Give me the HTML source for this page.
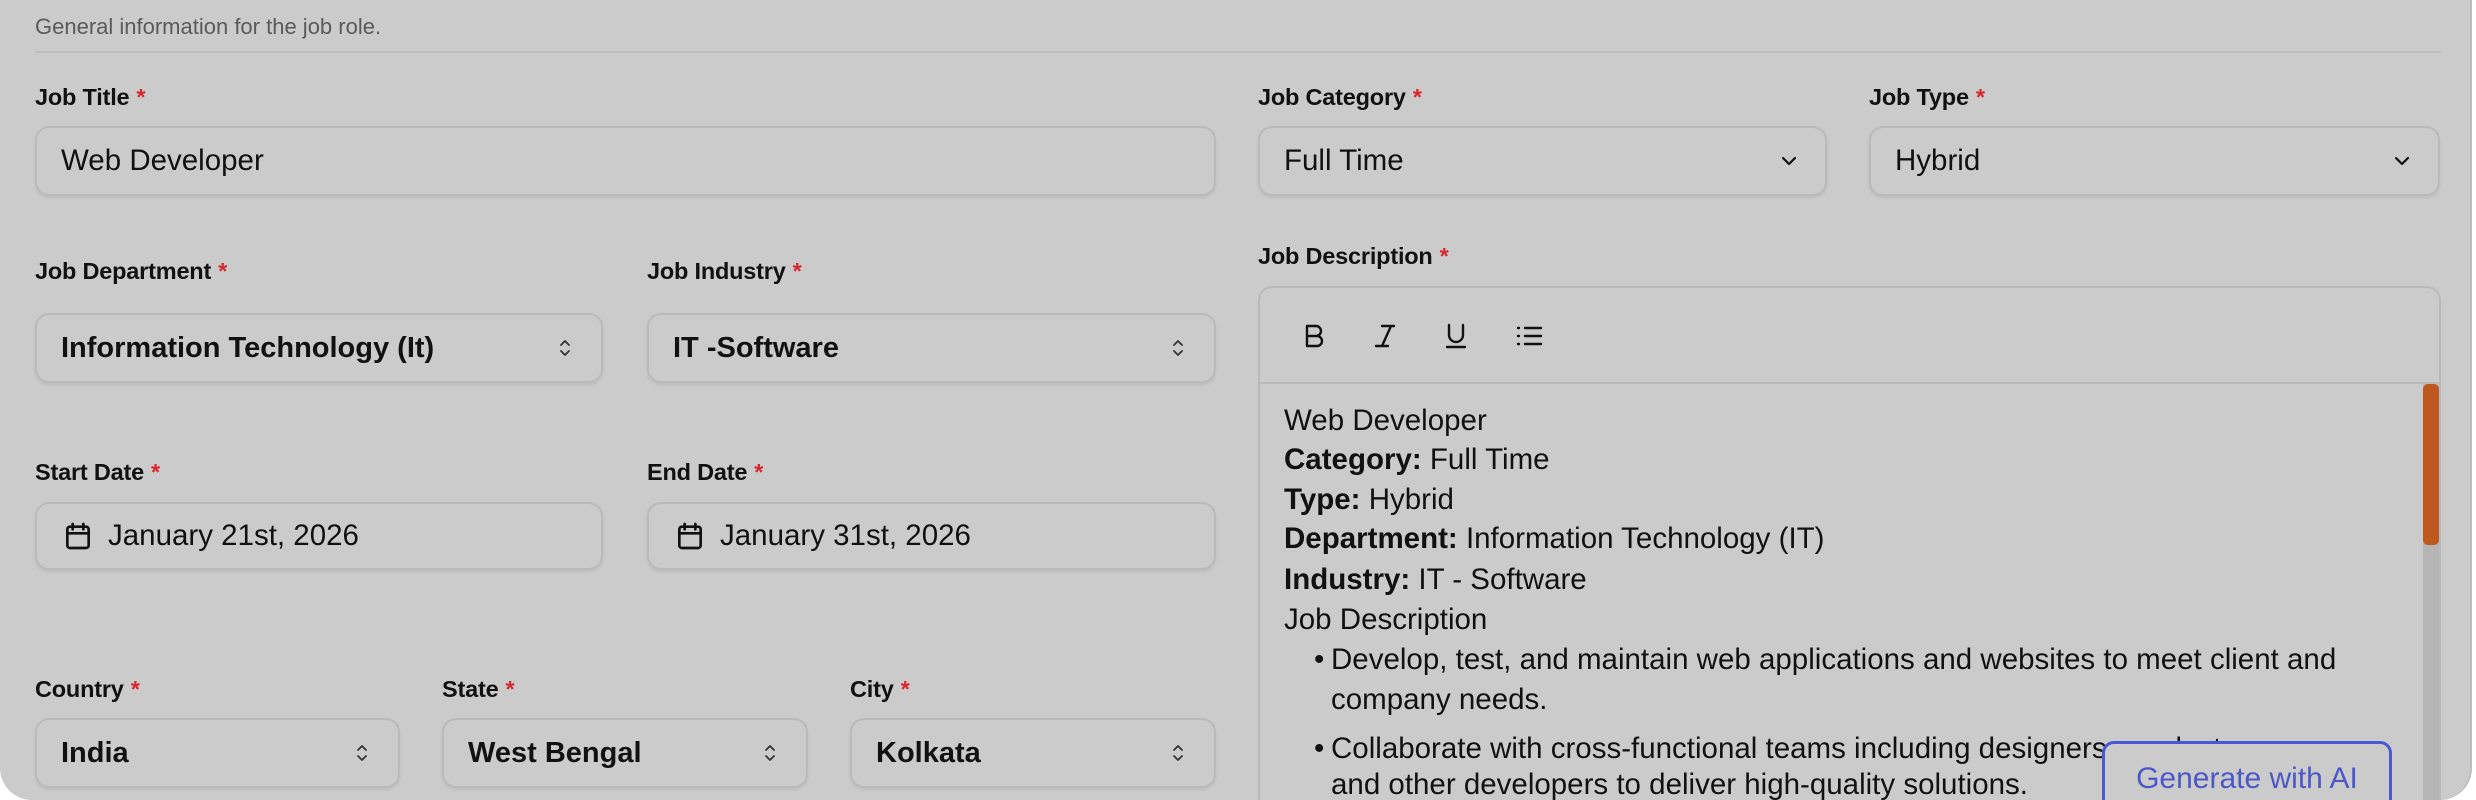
<!DOCTYPE html>
<html><head><meta charset="utf-8"><style>
*{box-sizing:border-box;margin:0;padding:0}
html,body{width:2476px;height:800px;overflow:hidden;background:#fff;font-family:"Liberation Sans",Arial,sans-serif}
.wrap{position:absolute;left:0;top:0;width:2476px;height:800px;overflow:hidden}
.card{position:absolute;left:0;top:-30px;width:2472px;height:830px;background:#cccbcb;border-radius:32px;border-right:2px solid #bdbcbc}
.a{position:absolute}
.sub{left:35px;top:14px;font-size:22px;color:#5a5a5a}
.hr{left:35px;top:51px;width:2406px;height:2px;background:#bebdbd}
.lbl{font-size:23.5px;color:#111;font-weight:700;letter-spacing:-0.2px}
.lbl b{color:#d9262c;font-weight:700;margin-left:7px}
.in{border:2px solid #bbbaba;border-radius:14px;background:#cccbcb;box-shadow:0 2px 3px rgba(0,0,0,.08);font-size:29.5px;color:#111;display:flex;align-items:center;padding-left:24px}
.in.s{font-weight:600;font-size:29px}
.chev{position:absolute;right:24px;top:50%;margin-top:-12px}
.ed{left:1258px;top:286px;width:1183px;height:514px;border:2px solid #bbbaba;border-bottom:none;border-radius:14px 14px 0 0;background:#cccbcb}
.tb{left:1258px;top:382px;width:1183px;height:2px;background:#bbbaba}
.txt{left:1284px;font-size:29.5px;color:#111;line-height:34px;white-space:nowrap}
.bul{left:1314px;font-size:29.5px;line-height:34px;color:#111}
</style></head><body><div class="wrap">
<div class="card"></div>
<div class="a sub">General information for the job role.</div>
<div class="a hr"></div>

<div class="a lbl" style="left:35px;top:84px">Job Title<b>*</b></div>
<div class="a in" style="left:35px;top:126px;width:1181px;height:70px">Web Developer</div>

<div class="a lbl" style="left:1258px;top:84px">Job Category<b>*</b></div>
<div class="a in" style="left:1258px;top:126px;width:569px;height:70px">Full Time<svg class="chev" width="24" height="24" viewBox="0 0 24 24"><path d="M6 9l6 6 6-6" fill="none" stroke="#111" stroke-width="2.2" stroke-linecap="round" stroke-linejoin="round"/></svg></div>
<div class="a lbl" style="left:1869px;top:84px">Job Type<b>*</b></div>
<div class="a in" style="left:1869px;top:126px;width:571px;height:70px">Hybrid<svg class="chev" width="24" height="24" viewBox="0 0 24 24"><path d="M6 9l6 6 6-6" fill="none" stroke="#111" stroke-width="2.2" stroke-linecap="round" stroke-linejoin="round"/></svg></div>

<div class="a lbl" style="left:35px;top:258px">Job Department<b>*</b></div>
<div class="a in s" style="left:35px;top:313px;width:568px;height:70px">Information Technology (It)<svg class="chev" width="24" height="24" viewBox="0 0 24 24"><path d="M8 9l4-4 4 4M8 15l4 4 4-4" fill="none" stroke="#333" stroke-width="1.8" stroke-linecap="round" stroke-linejoin="round"/></svg></div>
<div class="a lbl" style="left:647px;top:258px">Job Industry<b>*</b></div>
<div class="a in s" style="left:647px;top:313px;width:569px;height:70px">IT -Software<svg class="chev" width="24" height="24" viewBox="0 0 24 24"><path d="M8 9l4-4 4 4M8 15l4 4 4-4" fill="none" stroke="#333" stroke-width="1.8" stroke-linecap="round" stroke-linejoin="round"/></svg></div>

<div class="a lbl" style="left:35px;top:459px">Start Date<b>*</b></div>
<div class="a in" style="left:35px;top:502px;width:568px;height:68px;padding-left:25px"><svg width="32" height="32" viewBox="0 0 24 24" style="margin-right:14px"><rect x="4" y="5" width="16" height="16" rx="2" fill="none" stroke="#111" stroke-width="2"/><path d="M4 10h16M8 3v4M16 3v4" stroke="#111" stroke-width="2" stroke-linecap="round"/></svg>January 21st, 2026</div>
<div class="a lbl" style="left:647px;top:459px">End Date<b>*</b></div>
<div class="a in" style="left:647px;top:502px;width:569px;height:68px;padding-left:25px"><svg width="32" height="32" viewBox="0 0 24 24" style="margin-right:14px"><rect x="4" y="5" width="16" height="16" rx="2" fill="none" stroke="#111" stroke-width="2"/><path d="M4 10h16M8 3v4M16 3v4" stroke="#111" stroke-width="2" stroke-linecap="round"/></svg>January 31st, 2026</div>

<div class="a lbl" style="left:35px;top:676px">Country<b>*</b></div>
<div class="a in s" style="left:35px;top:718px;width:365px;height:70px">India<svg class="chev" width="24" height="24" viewBox="0 0 24 24"><path d="M8 9l4-4 4 4M8 15l4 4 4-4" fill="none" stroke="#333" stroke-width="1.8" stroke-linecap="round" stroke-linejoin="round"/></svg></div>
<div class="a lbl" style="left:442px;top:676px">State<b>*</b></div>
<div class="a in s" style="left:442px;top:718px;width:366px;height:70px">West Bengal<svg class="chev" width="24" height="24" viewBox="0 0 24 24"><path d="M8 9l4-4 4 4M8 15l4 4 4-4" fill="none" stroke="#333" stroke-width="1.8" stroke-linecap="round" stroke-linejoin="round"/></svg></div>
<div class="a lbl" style="left:850px;top:676px">City<b>*</b></div>
<div class="a in s" style="left:850px;top:718px;width:366px;height:70px">Kolkata<svg class="chev" width="24" height="24" viewBox="0 0 24 24"><path d="M8 9l4-4 4 4M8 15l4 4 4-4" fill="none" stroke="#333" stroke-width="1.8" stroke-linecap="round" stroke-linejoin="round"/></svg></div>

<div class="a lbl" style="left:1258px;top:243px">Job Description<b>*</b></div>
<div class="a ed"></div>
<div class="a tb"></div>
<svg class="a" style="left:1300px;top:320px" width="250" height="32" viewBox="0 0 250 32">
<g fill="none" stroke="#111" stroke-width="2.4" stroke-linecap="round" stroke-linejoin="round">
<path d="M7 6h9a5 5 0 0 1 0 10H7zM7 16h10a5 5 0 0 1 0 10H7zM7 6v20"/>
<path d="M82 6h12M76 26h12M91 6l-9 20"/>
<path d="M149 5v10a7 7 0 0 0 14 0V5M147 27h18"/>
<path d="M225 8h16M225 16h16M225 24h16M218 8h1M218 16h1M218 24h1"/>
</g></svg>
<div class="a txt" style="top:404px">Web Developer</div>
<div class="a txt" style="top:443px"><b>Category:</b> Full Time</div>
<div class="a txt" style="top:483px"><b>Type:</b> Hybrid</div>
<div class="a txt" style="top:522px"><b>Department:</b> Information Technology (IT)</div>
<div class="a txt" style="top:563px"><b>Industry:</b> IT - Software</div>
<div class="a txt" style="top:603px">Job Description</div>
<div class="a bul" style="top:643px">•</div>
<div class="a txt" style="left:1331px;top:643px">Develop, test, and maintain web applications and websites to meet client and</div>
<div class="a txt" style="left:1331px;top:683px">company needs.</div>
<div class="a bul" style="top:732px">•</div>
<div class="a txt" style="left:1331px;top:732px">Collaborate with cross-functional teams including designers, product managers,</div>
<div class="a txt" style="left:1331px;top:770px;line-height:30px">and other developers to deliver high-quality solutions.</div>
<div class="a" style="left:2423px;top:384px;width:16px;height:416px;background:#b6b5b6"></div>
<div class="a" style="left:2423px;top:384px;width:16px;height:161px;background:#bf581e;border-radius:5px"></div>
<div class="a" style="z-index:5;left:2102px;top:741px;width:290px;height:59px;border:3px solid #4a58d6;border-bottom:none;border-radius:12px 12px 0 0;background:#cccbcb;color:#4b58c8;font-size:30px;text-align:center;padding-top:18px">Generate with AI</div>
</div></body></html>
